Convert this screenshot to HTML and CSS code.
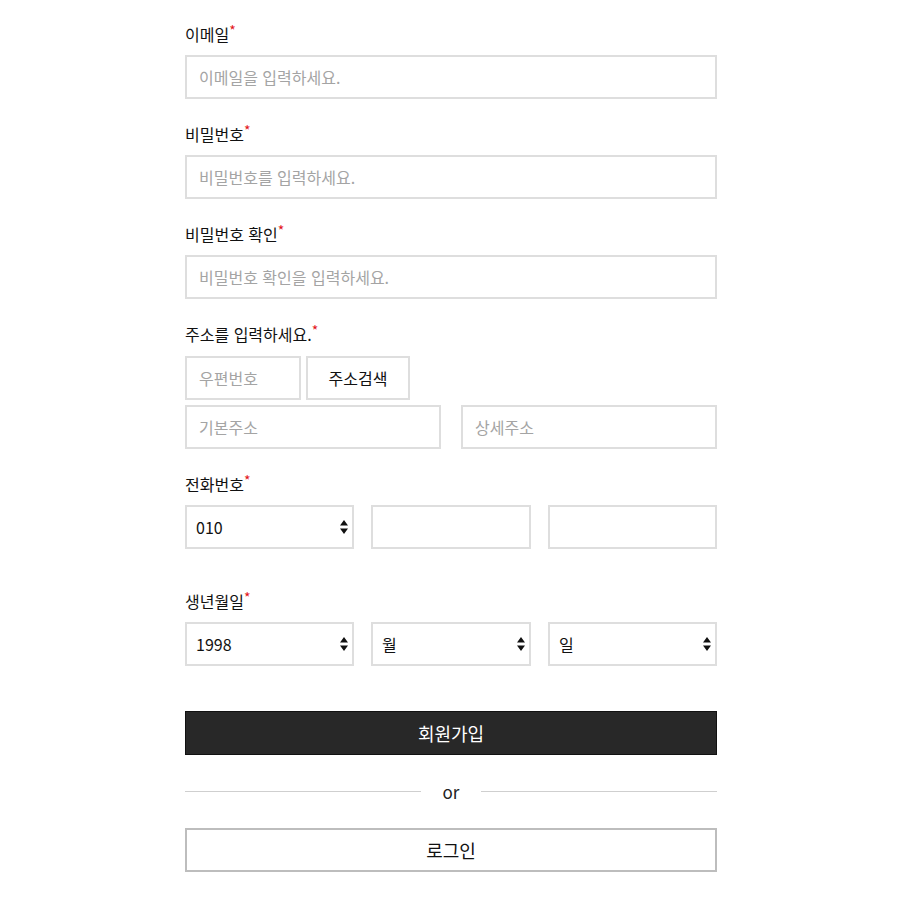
FILE: index.html
```html
<!DOCTYPE html>
<html lang="ko">
<head>
  <meta charset="UTF-8" />
  <meta name="viewport" content="width=device-width, initial-scale=1" />
  <title>회원가입</title>
  <link rel="stylesheet" href="styles.css">
</head>
<body>
  <form class="join-form" autocomplete="off">
    <div class="field">
      <label for="email">이메일<span class="req">*</span></label>
      <input type="text" id="email" placeholder="이메일을 입력하세요." />
    </div>

    <div class="field">
      <label for="pw">비밀번호<span class="req">*</span></label>
      <input type="password" id="pw" placeholder="비밀번호를 입력하세요." />
    </div>

    <div class="field">
      <label for="pwCheck">비밀번호 확인<span class="req">*</span></label>
      <input type="password" id="pwCheck" placeholder="비밀번호 확인을 입력하세요." />
    </div>

    <div class="field">
      <label for="zip">주소를 입력하세요.<span class="req">*</span></label>
      <div class="zip-row">
        <input type="text" id="zip" class="zip" placeholder="우편번호" />
        <button type="button" class="btn-search">주소검색</button>
      </div>
      <div class="addr-row">
        <input type="text" placeholder="기본주소" />
        <input type="text" placeholder="상세주소" />
      </div>
    </div>

    <div class="field field-phone">
      <label for="tel1">전화번호<span class="req">*</span></label>
      <div class="triple">
        <div class="select-box">
          <select id="tel1">
            <option>010</option>
            <option>011</option>
            <option>016</option>
          </select>
          <svg class="arrows" width="8" height="14" viewBox="0 0 8 14"><path d="M4 0L8 5.5H0z M4 14L0 8.5H8z" fill="#111"/></svg>
        </div>
        <input type="text" />
        <input type="text" />
      </div>
    </div>

    <div class="field">
      <label for="year">생년월일<span class="req">*</span></label>
      <div class="triple">
        <div class="select-box">
          <select id="year">
            <option>1998</option>
          </select>
          <svg class="arrows" width="8" height="14" viewBox="0 0 8 14"><path d="M4 0L8 5.5H0z M4 14L0 8.5H8z" fill="#111"/></svg>
        </div>
        <div class="select-box">
          <select>
            <option>월</option>
          </select>
          <svg class="arrows" width="8" height="14" viewBox="0 0 8 14"><path d="M4 0L8 5.5H0z M4 14L0 8.5H8z" fill="#111"/></svg>
        </div>
        <div class="select-box">
          <select>
            <option>일</option>
          </select>
          <svg class="arrows" width="8" height="14" viewBox="0 0 8 14"><path d="M4 0L8 5.5H0z M4 14L0 8.5H8z" fill="#111"/></svg>
        </div>
      </div>
    </div>

    <button type="submit" class="btn-join">회원가입</button>

    <div class="divider"><span>or</span></div>

    <button type="button" class="btn-login">로그인</button>
  </form>
</body>
</html>
```

FILE: styles.css
```css
* {
  box-sizing: border-box;
}
body {
  margin: 0;
  background: #fff;
  font-family: "Noto Sans CJK KR", "Noto Sans", sans-serif;
  color: #111;
}

.join-form {
  width: 532px;
  margin-left: calc(50% - 265px);
  padding: 22px 0 40px;
}

.field {
  margin-bottom: 23px;
}
.field label {
  display: block;
  height: 24px;
  font-size: 16px;
  line-height: 24px;
  margin-bottom: 9px;
  color: #111;
}
.req {
  color: #e3151a;
  font-size: 14px;
  vertical-align: top;
  line-height: 16px;
}

input,
select {
  display: block;
  width: 100%;
  height: 44px;
  border: 2px solid #dedede;
  background: #fff;
  padding: 0 12px;
  font-family: inherit;
  font-size: 16px;
  color: #111;
  outline: none;
}
input::placeholder {
  color: #a4a4a4;
}

/* 주소 */
.zip-row {
  display: flex;
  gap: 5px;
  padding-top: 1px;
  margin-bottom: 5px;
}
.zip-row .zip {
  width: 116px;
}
.btn-search {
  width: 104px;
  height: 44px;
  border: 2px solid #dedede;
  background: #fff;
  font-family: inherit;
  font-size: 16px;
  color: #111;
  cursor: pointer;
}
.addr-row {
  display: grid;
  grid-template-columns: 1fr 1fr;
  gap: 20px;
}

/* 전화번호 / 생년월일 */
.field-phone {
  margin-bottom: 40px;
}
.triple {
  display: grid;
  grid-template-columns: 169px 1fr 169px;
  gap: 17px;
}
.select-box {
  position: relative;
}
.select-box select {
  appearance: none;
  -webkit-appearance: none;
  padding-left: 9px;
}
.select-box .arrows {
  position: absolute;
  right: 6px;
  top: 15px;
  pointer-events: none;
}

.btn-join {
  display: block;
  width: 100%;
  height: 44px;
  margin-top: 45px;
  border: 1px solid #111;
  background: #282828;
  color: #fff;
  font-family: inherit;
  font-size: 18px;
  cursor: pointer;
}

.divider {
  display: flex;
  align-items: center;
  gap: 22px;
  margin: 24px 0 24px;
  font-size: 17px;
  color: #222;
}
.divider::before,
.divider::after {
  content: "";
  flex: 1;
  height: 1px;
  background: #cfcfcf;
}

.btn-login {
  display: block;
  width: 100%;
  height: 44px;
  border: 2px solid #bdbdbd;
  background: #fff;
  color: #111;
  font-family: inherit;
  font-size: 18px;
  cursor: pointer;
}
```
